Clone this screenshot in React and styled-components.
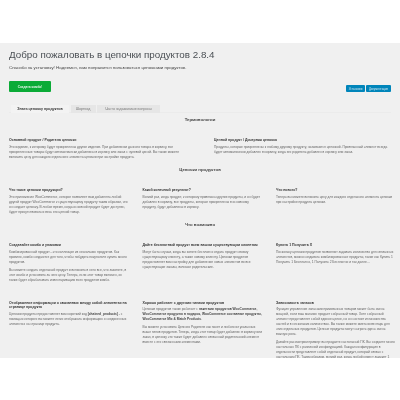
import React from 'react'
import styled, { createGlobalStyle } from 'styled-components'

const GlobalStyle = createGlobalStyle`
html, body {
  margin: 0;
  padding: 0;
  background: #fff;
  overflow: hidden;
}
`

const Page = styled.div`
width: 400px;
height: 400px;
padding-top: 43px;
box-sizing: border-box;
font-family: "Liberation Sans", sans-serif;
color: #444;
filter: blur(0.35px);
`
const Panel = styled.div`
height: 315px;
background-color: #f0f0f0;
padding: 0 9px;
box-sizing: border-box;
overflow: hidden;
`
const Title = styled.h1`
margin: 0;
padding-top: 4px;
font-size: 9.8px;
line-height: 16px;
font-weight: 400;
color: #4a4f54;
`
const Thanks = styled.p`
margin: 2px 0 0;
font-size: 4.4px;
line-height: 6px;
color: #444;
`
const ActionRow = styled.div`
display: flex;
justify-content: space-between;
align-items: flex-end;
margin-top: 10px;
`
const GreenButton = styled.a`
width: 42px;
height: 11px;
display: flex;
align-items: center;
justify-content: center;
background-color: #0bab37;
border-radius: 1px;
color: #e6f6ea;
font-size: 3.2px;
font-weight: 700;
`
const LinkGroup = styled.div`
display: flex;
gap: 1px;
`
const BlueButton = styled.a`
height: 7px;
width: ${props => props.$w}px;
display: flex;
align-items: center;
justify-content: center;
background-color: #0085ba;
border-radius: 1px;
color: #cfe6f1;
font-size: 2.9px;
`
const Tabs = styled.div`
display: flex;
gap: 1.5px;
margin-top: 13px;
padding-left: 2px;
height: 8px;
box-shadow: inset 0 -0.5px 0 #e6e6e6;
`
const Tab = styled.div`
width: ${props => props.$w}px;
display: flex;
align-items: center;
justify-content: center;
font-size: 3.6px;
background-color: ${props => (props.$active ? '#f3f3f3' : '#e6e6e6')};
color: ${props => (props.$active ? '#333' : '#777')};
font-weight: ${props => (props.$active ? 700 : 400)};
`
const SectionTitle = styled.h2`
margin: ${props => props.$top}px 0 0;
text-align: center;
font-size: 4.3px;
line-height: 6px;
font-weight: 700;
color: #444;
`
const Columns = styled.div`
display: grid;
grid-template-columns: ${props => props.$cols};
column-gap: ${props => props.$gap}px;
row-gap: ${props => props.$rowGap || 0}px;
margin-top: ${props => props.$top}px;
`
const ItemTitle = styled.h3`
margin: 0 0 2.3px;
font-size: 3.5px;
line-height: 4.6px;
font-weight: 700;
color: #333;
`
const Text = styled.p`
margin: 0 0 2.6px;
font-size: 3.25px;
line-height: 5px;
color: #666;
b {
  color: #444;
  font-weight: 700;
}
`

const App = () => {
  return (
    <Page>
      <GlobalStyle />
      <Panel>
        <Title>Добро пожаловать в цепочки продуктов 2.8.4</Title>
        <Thanks>Спасибо за установку! Надеемся, вам понравится пользоваться цепочками продуктов.</Thanks>
        <ActionRow>
          <GreenButton>Создать комбо!</GreenButton>
          <LinkGroup>
            <BlueButton $w={19}>Установки</BlueButton>
            <BlueButton $w={25}>Документация</BlueButton>
          </LinkGroup>
        </ActionRow>
        <Tabs>
          <Tab $active $w={58}>Знать цепочку продуктов</Tab>
          <Tab $w={25}>Шорткод</Tab>
          <Tab $w={63}>Часто задаваемые вопросы</Tab>
        </Tabs>
        <SectionTitle $top={4}>Терминологии</SectionTitle>
        <Columns $cols="170px 177px" $gap={35} $top={15}>
          <div>
            <ItemTitle>Основной продукт / Родитель цепочки</ItemTitle>
            <Text>Это изделие, к которому будут прикреплены другие изделия. При добавлении данного товара в корзину, все прикрепленные товары будут автоматически добавлены в корзину или заказ с нулевой ценой. Вы также можете включить цену для каждого отдельного элемента цепочки при настройке продукта.</Text>
          </div>
          <div>
            <ItemTitle>Цепной продукт / Дочерняя цепочка</ItemTitle>
            <Text>Продукты, которые прикреплены к любому другому продукту, называются цепочкой. Привязанный элемент всегда будет автоматически добавлен в корзину, когда его родитель добавлен в корзину или заказ.</Text>
          </div>
        </Columns>
        <SectionTitle $top={4.7}>Цепочки продуктов</SectionTitle>
        <Columns $cols="repeat(3, 120px)" $gap={13.5} $top={15.2}>
          <div>
            <ItemTitle>Что такое цепочки продукции?</ItemTitle>
            <Text>Это приложение WooCommerce, которое позволяет вам добавлять любой другой продукт WooCommerce к существующему продукту таким образом, что он создает цепочку. В любое время, когда основной продукт будет доступен, будет присутствовать и весь его цепной товар.</Text>
          </div>
          <div>
            <ItemTitle>Какой конечный результат?</ItemTitle>
            <Text>Всякий раз, когда продукт, к которому привязаны другие продукты, и он будет добавлен в корзину, все продукты, которые прикреплены в основному продукту, будут добавлены в корзину.</Text>
          </div>
          <div>
            <ItemTitle>Что нового?</ItemTitle>
            <Text>Теперь вы можете включить цену для каждого отдельного элемента цепочки при настройке продукта цепочки.</Text>
          </div>
        </Columns>
        <SectionTitle $top={4.6}>Что возможно</SectionTitle>
        <Columns $cols="repeat(3, 120px)" $gap={13.5} $top={15} $rowGap={15}>
          <div>
            <ItemTitle>Создавайте комбо и упаковки</ItemTitle>
            <Text>Комбинированный продукт - это коллекция из нескольких продуктов. Как правило, комбо создаются для того, чтобы побудить покупателя купить много продуктов.</Text>
            <Text>Вы можете создать отдельный продукт и включить в него все, что захотите, в этот комбо и установить за него цену. Теперь, если этот товар включен, он также будет обрабатывать инвентаризацию всех продуктов комбо.</Text>
          </div>
          <div>
            <ItemTitle>Дайте бесплатный продукт всем вашим существующим клиентам</ItemTitle>
            <Text>Могут быть случаи, когда вы хотите бесплатно отдать продукт своему существующему клиенту, а также новому клиенту. Цепочки продуктов предоставляет вам настройку для добавления новых элементов во все существующие заказы, включая родительские.</Text>
          </div>
          <div>
            <ItemTitle>Купить 1 Получить X</ItemTitle>
            <Text>Поскольку цепочки продуктов позволяют задавать количество для связанных элементов, можно создавать комбинированные продукты, такие как Купить 1 Получить 1 Бесплатно, 1 Получить 2 Бесплатно и так далее...</Text>
          </div>
          <div>
            <ItemTitle>Отображение информации о связанных между собой элементах на странице продукта</ItemTitle>
            <Text>Цепочки продукты предоставляет вам короткий код <b>[chained_products]</b> - с помощью которого вы можете легко отображать информацию о соединенных элементах на странице продукта.</Text>
          </div>
          <div>
            <ItemTitle>Хорошо работает с другими типами продуктов</ItemTitle>
            <Text>Цепочки продуктов также работает с <b>пакетами продуктов WooCommerce, WooCommerce продукты в подарок, WooCommerce составные продукты, WooCommerce Mix & Match Products</b>.</Text>
            <Text>Вы можете установить Цепного Родителя как пакет и любого из указанных выше типов продуктов. Теперь, когда этот товар будет добавлен в корзину или заказ, в цепочку это также будет добавлен связанный родительский элемент вместе с его связанными элементами.</Text>
          </div>
          <div>
            <ItemTitle>Зависимость запасов</ItemTitle>
            <Text>Функция управления запасами прикованных товаров может быть очень мощной, если ваш магазин продает собранный товар. Хотя собранный элемент представляет собой единое целое, но он состоит из множества частей и в нескольких количествах. Вы также можете иметь инвентарь для этих отдельных продуктов. Цепные продукты могут сыграть здесь очень важную роль.</Text>
            <Text>Давайте рассмотрим пример: вы продаете настольный ПК. Вы создаете много настольных ПК с различной конфигурацией. Каждая конфигурация в отдельности представляет собой отдельный продукт, который связан с настольным ПК. Таким образом, всякий раз, когда любой клиент закажет 1 настольный ПК, инвентарь его частей будет автоматически уменьшаться соответственно.</Text>
          </div>
        </Columns>
      </Panel>
    </Page>
  )
}

export default App
